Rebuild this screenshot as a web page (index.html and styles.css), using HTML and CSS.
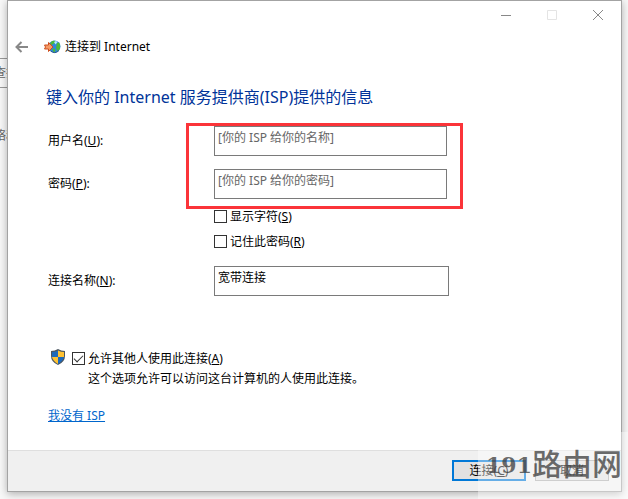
FILE: index.html
```html
<!DOCTYPE html>
<html lang="zh-CN">
<head>
<meta charset="utf-8">
<meta name="viewport" content="width=device-width, initial-scale=1">
<title>连接到 Internet</title>
<link rel="stylesheet" href="styles.css">
</head>
<body>
<div class="behind" aria-hidden="true">
  <div class="behind-field">查找</div>
  <div class="behind-text">络和</div>
</div>
<main class="window">
  <div class="titlebar">
    <button class="caption" type="button" aria-label="最小化"><svg width="12" height="12" viewBox="0 0 12 12"><path d="M1 6.500h10" /></svg></button>
    <button class="caption" type="button" aria-label="最大化" disabled><svg width="12" height="12" viewBox="0 0 12 12"><path d="M1.500 1.500h9v9h-9z" /></svg></button>
    <button class="caption" type="button" aria-label="关闭"><svg width="12" height="12" viewBox="0 0 12 12"><path d="M1 1l10 10M11 1L1 11" /></svg></button>
  </div>
  <header class="header">
    <button class="back" type="button" aria-label="返回"><svg width="14" height="12" viewBox="0 0 14 12"><path d="M13 6H2M6.500 1L1.500 6l5 5" /></svg></button>
    <svg class="globe" width="17" height="14" viewBox="0 0 17 14">
      <circle cx="10.500" cy="6.500" r="6" fill="#2f86dc" />
      <path d="M7 2Q9 0 11 1l0 2-2 1-1 1-2-1zM13 3l2-0.500q2 3 0.500 7l-2 1.500-1.500-3zM8 9l2.500-0.500 1 2.500-1.500 1.500z" fill="#4cb83a" />
      <path d="M10 2l2-1 1.500 1-2 2.500z" fill="#b6ecff" />
      <path d="M6.500 11q4.500 3.500 8.500-0.500" fill="none" stroke="#22558e" />
      <path d="M0.500 5h4V2.500L9 7l-4.500 4.500V9h-4l1-2z" fill="#f59a66" stroke="#cc4f1e" />
    </svg>
    <span>连接到 Internet</span>
  </header>
  <form class="content">
    <h1>键入你的 Internet 服务提供商(ISP)提供的信息</h1>
    <div class="credentials">
      <div class="row">
        <label for="user">用户名(<u>U</u>):</label>
        <input class="field" id="user" type="text" placeholder="[你的 ISP 给你的名称]">
      </div>
      <div class="row">
        <label for="password">密码(<u>P</u>):</label>
        <input class="field" id="password" type="text" placeholder="[你的 ISP 给你的密码]">
      </div>
    </div>
    <div class="options">
      <label class="check"><input type="checkbox"><span>显示字符(<u>S</u>)</span></label>
      <label class="check"><input type="checkbox"><span>记住此密码(<u>R</u>)</span></label>
    </div>
    <div class="row">
      <label for="name">连接名称(<u>N</u>):</label>
      <input class="field wide" id="name" type="text" value="宽带连接">
    </div>
    <div class="share">
      <svg width="16" height="16" viewBox="0 0 16 16">
        <path d="M8 0q3 2 7 2v5q0 6-7 9-7-3-7-9V2q4 0 7-2z" fill="#4b5660" />
        <path d="M8 1.500V8H2V3q3 0 6-1.500z" fill="#1d69bb" />
        <path d="M8 1.500Q11 3 14 3v5H8zM2 8h6v7Q3 12 2 8z" fill="#ffc232" />
        <path d="M8 8h6q-1 4-6 7z" fill="#1d69bb" />
      </svg>
      <label class="check"><input type="checkbox" checked><span>允许其他人使用此连接(<u>A</u>)</span></label>
      <p>这个选项允许可以访问这台计算机的人使用此连接。</p>
    </div>
    <a class="link" href="#isp">我没有 ISP</a>
  </form>
  <footer class="footer">
    <button class="button primary" type="button">连接(<u>C</u>)</button>
    <button class="button" type="button">取消</button>
  </footer>
</main>
<div class="watermark"><span class="digits">191</span><span>路由网</span></div>
</body>
</html>
```
FILE: styles.css
```css
*, ::before, ::after { box-sizing: border-box; }
body {
  margin: 0;
  min-height: 100vh;
  padding: 0 6px 7px 7px;
  display: flex;
  position: relative;
  overflow: hidden;
  background: #f8f8f8;
  color: #000;
  font: 12px/20px "Noto Sans", "Noto Sans CJK SC", sans-serif;
}
button, input { font: inherit; color: inherit; }
svg { display: block; flex: none; }

.behind {
  position: absolute;
  top: 58px;
  left: -6px;
  width: 20px;
  color: #666;
  white-space: nowrap;
  overflow: hidden;
}
.behind-field { height: 30px; padding-top: 4px; border: solid #999; border-width: 1px 0; }
.behind-text { margin-top: 38px; }

.window {
  flex: 1;
  display: flex;
  flex-direction: column;
  position: relative;
  background: #fff;
  border: 1px solid #a3a3a3;
  box-shadow: 0 2px 8px rgba(0, 0, 0, .3);
}
.titlebar { display: flex; justify-content: flex-end; height: 28px; }
.caption {
  width: 46px;
  padding: 0;
  border: 0;
  background: none;
  display: flex;
  align-items: center;
  justify-content: center;
}
.caption svg, .back svg { fill: none; stroke: #888; }
.caption:disabled svg { stroke: #e4e4e4; }
.header { display: flex; align-items: center; height: 36px; padding-left: 7px; }
.back { padding: 0; border: 0; background: none; }
.back svg { stroke-width: 2; }
.globe { margin: 0 4px 0 15px; }

.content { flex: 1; padding: 0 16px 0 40px; }
h1 {
  margin: 18px 0 15px -2px;
  color: #003399;
  font-size: 16px;
  font-weight: 400;
  line-height: 28px;
}
.credentials { position: relative; display: grid; gap: 13px; }
.credentials::after {
  content: "";
  position: absolute;
  top: -3px;
  left: 138px;
  width: 277px;
  bottom: -10px;
  border: 3px solid #fb3439;
  pointer-events: none;
}
.row { display: grid; grid-template-columns: 166px 1fr; align-items: center; }
.field {
  width: 233px;
  height: 30px;
  padding: 0 3px 8px;
  border: 1px solid #7a7a7a;
  border-radius: 0;
  background: #fff;
}
.field.wide { width: 235px; }
.field::placeholder { color: #666; opacity: 1; }
.options { display: grid; gap: 5px; padding: 8px 0 14px 166px; }
.check { display: flex; align-items: center; gap: 3px; }
.check input {
  appearance: none;
  width: 13px;
  height: 13px;
  margin: 0 0 2px;
  border: 1px solid #333;
  background: #fff;
}
.check input:checked::before {
  content: "";
  display: block;
  width: 9px;
  height: 5px;
  margin: 2px 1px;
  border: solid #333;
  border-width: 0 0 1px 1px;
  transform: rotate(-45deg);
}
.share {
  display: grid;
  grid-template-columns: 16px 1fr;
  column-gap: 6px;
  align-items: start;
  margin: 53px 0 17px 2px;
}
.share p { grid-column: 2; margin: 0 0 0 16px; }
.link { color: #0066cc; }

.footer {
  display: flex;
  justify-content: flex-end;
  gap: 9px;
  height: 41px;
  padding: 9px 12px;
  background: #f0f0f0;
  border-top: 1px solid #dfdfdf;
}
.button {
  width: 74px;
  height: 21px;
  padding: 0;
  border: 1px solid #adadad;
  background: #e1e1e1;
  line-height: 16px;
}
.button.primary { border: 2px solid #0078d7; }

.watermark {
  position: absolute;
  right: 0;
  bottom: 0;
  width: 150px;
  height: 67px;
  padding: 0 6px 8px 0;
  display: flex;
  align-items: center;
  justify-content: flex-end;
  background: rgba(255, 255, 255, .4);
  color: rgba(60, 60, 60, .75);
  font: 500 30px/40px "Noto Sans CJK SC", sans-serif;
  pointer-events: none;
}
.digits { padding-top: 6px; font: 700 22px/40px "DejaVu Serif", serif; }
```
